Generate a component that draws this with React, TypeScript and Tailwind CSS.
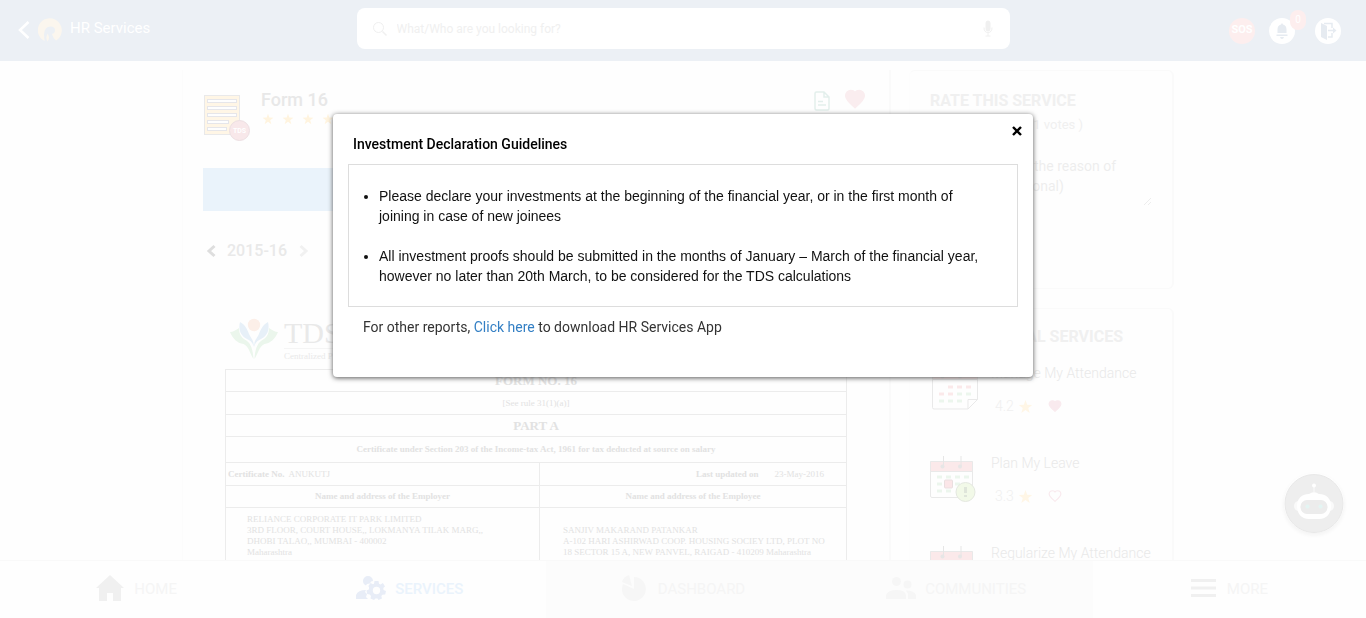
import React from "react";

const StarIcon = ({ className }: { className: string }) => (
  <svg viewBox="0 0 24 24" className={className} fill="currentColor" aria-hidden="true">
    <path d="M12 1.5l2.7 7.7 8.1.2-6.4 5 2.3 7.9-6.7-4.7-6.7 4.7 2.3-7.9-6.4-5 8.1-.2z" />
  </svg>
);

const HeartIcon = ({ className, filled = true }: { className: string; filled?: boolean }) => (
  <svg
    viewBox="0 0 24 24"
    className={className}
    fill={filled ? "currentColor" : "none"}
    stroke="currentColor"
    strokeWidth="2"
    aria-hidden="true"
  >
    <path d="M12 21.2l-1.3-1.2C5.4 15.4 2 12.3 2 8.5 2 5.4 4.4 3 7.5 3c1.7 0 3.4.8 4.5 2.1C13.1 3.8 14.8 3 16.5 3 19.6 3 22 5.4 22 8.5c0 3.8-3.4 6.9-8.7 11.5z" />
  </svg>
);

const FormIcon = () => (
  <svg viewBox="0 0 48 50" className="h-[50px] w-12 shrink-0" aria-hidden="true">
    <rect x="1.500" y="3.500" width="35" height="39" fill="#fff6e6" stroke="#e9e9ea" />
    {[7.5, 14.5, 21.5, 28.5, 35.5].map((y, i) => (
      <rect key={y} x="4.500" y={y} width={i === 3 ? 21 : i === 4 ? 19 : 29} height="3" fill="#fefefe" stroke="#e6e6ea" />
    ))}
    <circle cx="36.500" cy="38.500" r="10" fill="#f8e8ea" stroke="#ecdfe2" />
    <text x="36.500" y="41" textAnchor="middle" fontSize="7" fontWeight="700" fill="#fff" fontFamily="Roboto, sans-serif">
      TDS
    </text>
  </svg>
);

const TdsLogo = () => (
  <svg viewBox="0 0 50 42" className="h-[42px] w-[50px] shrink-0" aria-hidden="true">
    <circle cx="25" cy="7" r="6.200" fill="#fcefe8" />
    <path d="M11 4c-2 8 1 14 7 17 4 2 6 4 6.500 8 1-6-2-8-4-12-2-5-4-10-9.500-13zM39 4c2 8-1 14-7 17-4 2-6 4-6.500 8-1-6 2-8 4-12 2-5 4-10 9.500-13z" fill="#e7f0f8" />
    <path d="M1 14c3 0 6-2 9-4 0 7 3 10 8 13 4 3 6 9 6.500 18-4-6-4-12-10-15C8 25 4 21 1 14zM49 14c-3 0-6-2-9-4 0 7-3 10-8 13-4 3-6 9-6.500 18 4-6 4-12 10-15 6.500-1 10.500-5 13.500-12z" fill="#ebf6ec" />
  </svg>
);

const CalendarIcon = ({ variant }: { variant: "sheet" | "alert" }) => (
  <svg viewBox="1 -2 50 50" className="h-[50px] w-[50px] shrink-0" fill="none" aria-hidden="true">
    {variant === "sheet" ? (
      <>
        <path d="M3.500 6.500h45v28l-9.500 9.500h-34q-1.500 0-1.500-1.500z" stroke="#e9e9e9" />
        <path d="M39 44v-9.500h9.500" stroke="#e9e9e9" />
        <path d="M3.500 6.500h45v8h-45z" fill="#faeaea" stroke="#e9e9e9" />
        <path d="M19 22h5M28 22h5M37 22h5M10 29h5M19 29h5" stroke="#fbe9ea" strokeWidth="3" />
        <path d="M28 29h5M37 29h5M10 36h5M19 36h5M28 36h5" stroke="#ecf6ed" strokeWidth="3" />
      </>
    ) : (
      <>
        <rect x="1.500" y="6.500" width="42" height="36" rx="1.500" stroke="#e9e9e9" />
        <path d="M1.500 6.500h42v10h-42z" fill="#fbe9ea" stroke="#e9e9e9" />
        <path d="M8 22h5M17 22h5M26 22h5M35 22h5M8 29h5M26 29h5M8 36h5M17 36h5" stroke="#ecf6ed" strokeWidth="3" />
        <rect x="15.500" y="25" width="8" height="8" rx="1" fill="#fbe6e8" stroke="#eadfe0" />
        <circle cx="36.500" cy="37" r="9.500" fill="#f2f9e8" stroke="#e4e8e0" />
        <path d="M36.500 32v6M36.500 40v2" stroke="#dfe5da" strokeWidth="3" />
      </>
    )}
    <path d="M14.500 1v10M32 1v10" stroke="#e6e6e6" />
    <circle cx="13.500" cy="11.500" r="2" fill="#e6e6e6" />
    <circle cx="31" cy="11.500" r="2" fill="#e6e6e6" />
  </svg>
);

const RobotIcon = () => (
  <svg viewBox="0 0 60 60" className="size-[60px]" aria-hidden="true">
    <circle cx="30" cy="30.500" r="29" fill="#eee" stroke="#e8e8e8" />
    <path d="M30 12v8" stroke="#fafafa" />
    <circle cx="30" cy="12.500" r="2" fill="#fff" />
    <path d="M14 28q-4 1-4 5t4 5zM46 28q4 1 4 5t-4 5z" fill="#fafafa" />
    <path d="M25 21l3-1.500h4l3 1.500c8 0 12 5 12 12s-4 13-12 13H25c-8 0-12-6-12-13s4-12 12-12z" fill="#fff" />
    <rect x="16.500" y="27" width="27" height="14" rx="6.500" fill="#ececec" />
    <circle cx="23.500" cy="33.500" r="2" fill="#e3f5f3" />
    <circle cx="36.500" cy="33.500" r="2" fill="#e3f5f3" />
  </svg>
);

const Header = () => (
  <header className="grid h-[61px] shrink-0 grid-cols-[1fr_minmax(0,653px)_1fr] items-start bg-[#ecf0f5]">
    <div className="flex h-[60px] items-center pl-[18px] text-white">
      <button aria-label="Back" className="h-5 w-3">
        <svg viewBox="0 0 12 20" className="h-5 w-3" fill="none" stroke="#fff" strokeWidth="2.500" aria-hidden="true">
          <path d="M10.500 2L2 10l8.500 8" />
        </svg>
      </button>
      <svg viewBox="0 0 24 24" className="ml-2 size-6" aria-hidden="true">
        <path d="M6.500 23A12 12 0 1118 22.500q-3-2.500-4-6.500 3-.5 3-4 0-3.500-4.500-3.500-6 0-6.500 8z" fill="#fbf6ee" />
        <path d="M9.500 15.500c2 3 2 5.500 0 8-1.500-2.500-1.500-5 0-8z" fill="#fbf6ee" />
      </svg>
      <h1 className="mb-1 ml-2 text-[15px] leading-5">HR Services</h1>
    </div>
    <label className="mt-2 flex h-[41px] items-center rounded-lg bg-white pr-4 pl-[15px]">
      <svg viewBox="0 0 16 16" className="size-4" fill="none" stroke="#f0f0f0" aria-hidden="true">
        <circle cx="6.500" cy="6.500" r="5" />
        <path d="M10.500 10.500l4 4" strokeWidth="1.500" />
      </svg>
      <input
        type="search"
        aria-label="Search"
        placeholder="What/Who are you looking for?"
        className="ml-[9px] min-w-0 flex-1 bg-transparent text-xs outline-none placeholder:text-[#f0f0f0]"
      />
      <svg viewBox="0 0 12 18" className="h-[18px] w-3" fill="none" stroke="#f0f0f0" aria-hidden="true">
        <rect x="4" y="1" width="4" height="10" rx="2" fill="#f0f0f0" />
        <path d="M2 7.500q0 5 4 5t4-5M6 13v3M3.500 16h5" />
      </svg>
    </label>
    <div className="flex h-[61px] items-center justify-end pr-[25px]">
      <button className="size-[26px] rounded-full bg-[#fdeeee] text-[11px] font-bold text-white">SOS</button>
      <button aria-label="Notifications" className="relative ml-[14px] flex size-[26px] items-center justify-center rounded-full bg-white">
        <svg viewBox="0 0 12 16" className="h-4 w-3" fill="#e6ebf1" aria-hidden="true">
          <path d="M6 0l1 1.500c2.500.5 3.500 2.500 3.500 5V10h-9V6.500c0-2.500 1-4.500 3.500-5zM.5 11.500h11V13H.5zM4 14h4q-.5 2-2 2t-2-2z" />
        </svg>
        <span className="absolute -top-2 left-[21px] flex h-5 w-4 items-center justify-center rounded-full bg-[#fdeeee] text-[10px] text-white">0</span>
      </button>
      <button aria-label="Log out" className="ml-5 flex size-[26px] items-center justify-center rounded-full bg-white">
        <svg viewBox="0 0 18 18" className="size-[18px]" aria-hidden="true">
          <path d="M2 1l6 3v14l-6-3z" fill="#e6ebf1" />
          <path d="M5 1.500h8V6M13 11v4H9M9 8.500h6" fill="none" stroke="#e6ebf1" strokeWidth="1.500" />
          <path d="M14 5.500l3.500 3-3.500 3z" fill="#e6ebf1" />
        </svg>
      </button>
    </div>
  </header>
);

const FormTable = () => (
  <table className="ml-[22px] w-[622px] table-fixed border-collapse font-['Liberation_Serif',serif] text-[9px] leading-[11px] text-[#e2e2e2] [&_td]:border [&_td]:border-[#ececec] [&_td]:py-0 [&_th]:border [&_th]:border-[#ececec] [&_th]:py-0">
    <colgroup>
      <col className="w-[314px]" />
      <col />
    </colgroup>
    <tbody>
      <tr className="h-[22px]"><th colSpan={2} className="text-[13px]">FORM NO. 16</th></tr>
      <tr className="h-[23px]"><td colSpan={2} className="text-center">[See rule 31(1)(a)]</td></tr>
      <tr className="h-[22px]"><th colSpan={2} className="text-[13px]">PART A</th></tr>
      <tr className="h-[26px]"><th colSpan={2}>Certificate under Section 203 of the Income-tax Act, 1961 for tax deducted at source on salary</th></tr>
      <tr className="h-[23px]">
        <td className="pl-0.5"><b>Certificate No.</b>&nbsp; ANUKUTJ</td>
        <td className="pr-[22px] text-right"><b className="mr-4">Last updated on</b>23-May-2016</td>
      </tr>
      <tr className="h-[22px]">
        <th>Name and address of the Employer</th>
        <th>Name and address of the Employee</th>
      </tr>
      <tr className="h-20 align-top">
        <td className="pl-[21px]">
          <p className="mt-[6px]">
            RELIANCE CORPORATE IT PARK LIMITED<br />3RD FLOOR, COURT HOUSE,, LOKMANYA TILAK MARG,,<br />DHOBI TALAO,, MUMBAI - 400002<br />Maharashtra
          </p>
        </td>
        <td className="pl-[23px] whitespace-nowrap">
          <p className="mt-[17px]">
            SANJIV MAKARAND PATANKAR<br />A-102 HARI ASHIRWAD COOP. HOUSING SOCIEY LTD, PLOT NO<br />18 SECTOR 15 A, NEW PANVEL, RAIGAD - 410209 Maharashtra
          </p>
        </td>
      </tr>
    </tbody>
  </table>
);

const services = [
  { name: "Manage My Attendance", rating: "4.2", liked: true, icon: "sheet" as const },
  { name: "Plan My Leave", rating: "3.3", liked: false, icon: "alert" as const },
  { name: "Regularize My Attendance", rating: null, liked: false, icon: "alert" as const },
];

const Content = () => (
  <main className="min-h-0 flex-1 overflow-hidden pt-[9px] pr-[10px]">
    <div className="mx-auto flex max-w-[992px] gap-[18px]">
      <section className="min-w-0 flex-1 border-r-2 border-l border-r-[#fafafa] border-l-[#fcfcfc] pt-[22px] pl-5">
        <div className="flex h-[76px] pr-5">
          <FormIcon />
          <div className="ml-[10px]">
            <h2 className="-mt-px text-lg leading-[18px] font-medium text-[#e8e8e8]">Form 16</h2>
            <div className="mt-1 ml-px flex gap-2 text-[#fff4df]">
              {[1, 2, 3, 4, 5].map((n) => <StarIcon key={n} className="size-3" />)}
            </div>
          </div>
          <svg viewBox="0 0 16 20" className="-mt-px ml-auto h-5 w-4" fill="none" stroke="#e3efec" strokeWidth="1.500" aria-hidden="true">
            <path d="M1 2.500Q1 1 2.500 1H10l5 5v11.500q0 1.500-1.500 1.500h-11Q1 19 1 17.500zM10 1v5h5M4 10.500h5M4 14h8" />
          </svg>
          <HeartIcon className="-mt-1 mr-[3px] ml-[14px] size-[22px] text-[#faedef]" />
        </div>
        <div className="mr-5 h-[43px] bg-[#eaf3fb]" />
        <div className="mt-[30px] flex h-5 items-center text-base font-medium text-[#e9e9e9]">
          <button aria-label="Previous year" className="ml-[3px]">
            <svg viewBox="0 0 10 14" className="h-[14px] w-[10px]" fill="none" stroke="#dedede" strokeWidth="3" aria-hidden="true"><path d="M8.500 2l-5.500 5 5.500 5" /></svg>
          </button>
          <span className="ml-[11px]">2015-16</span>
          <button aria-label="Next year" className="ml-3">
            <svg viewBox="0 0 10 14" className="h-[14px] w-[10px]" fill="none" stroke="#f1f1f1" strokeWidth="3" aria-hidden="true"><path d="M1.500 2L7 7l-5.500 5" /></svg>
          </button>
        </div>
        <div className="mt-[57px] mb-[9px] ml-[26px] flex h-[42px] font-['Liberation_Serif',serif] whitespace-nowrap text-[#e9e9e9]">
          <TdsLogo />
          <div className="ml-[5px]">
            <div className="border-b border-[#f5f5f5] text-[30px] leading-[30px]">TDS</div>
            <div className="text-[9px] leading-[14px]">Centralized P</div>
          </div>
        </div>
        <FormTable />
      </section>
      <aside className="flex w-[265px] flex-col gap-[19px] text-[#f0f0f0]">
        <section className="h-[219px] rounded-md border border-r-2 border-[#fafafa] border-l-[#fdfdfd] px-5 pt-5">
          <h2 className="text-base leading-5 font-bold">RATE THIS SERVICE</h2>
          <p className="mt-1 mr-[69px] text-right text-[13px] leading-5">( 1 votes )</p>
          <textarea
            aria-label="Reason for rating"
            placeholder="Please mention the reason of your rating (optional)"
            className="mt-[21px] h-[50px] w-full pr-8 pl-1 text-sm leading-5 opacity-10 outline-none placeholder:text-[#666]"
          />
        </section>
        <section className="rounded-md border border-r-2 border-[#fafafa] border-l-[#fdfdfd] px-5 pt-[18px]">
          <h2 className="text-base leading-5 font-bold">PROFESSIONAL SERVICES</h2>
          <ul className="mt-4">
            {services.map((s) => (
              <li key={s.name} className="flex h-[90px] gap-[11px]">
                <CalendarIcon variant={s.icon} />
                <div className="min-w-0 flex-1 text-sm leading-5 text-[#e9e9e9]">
                  <h3 className="overflow-hidden font-light whitespace-nowrap">{s.name}</h3>
                  {s.rating && (
                    <div className="mt-[13px] ml-1 flex items-center font-light text-[#f0f0f0]">
                      {s.rating}
                      <StarIcon className="ml-1 size-[15px] text-[#fff6e6]" />
                      <HeartIcon filled={s.liked} className="ml-[15px] size-[14px] text-[#f9eaee]" />
                    </div>
                  )}
                </div>
              </li>
            ))}
          </ul>
        </section>
      </aside>
    </div>
  </main>
);

const Nav = () => (
  <nav className="grid h-[58px] shrink-0 grid-cols-5 border-t border-[#f9f9f9] text-[15px] text-[#f5f5f5] [&>a]:flex [&>a]:items-center [&>a]:justify-center [&>a>svg]:mb-1">
    <a href="#home">
      <svg viewBox="0 0 28 26" className="mr-[10px] h-[26px] w-7" fill="#f0f0f0" aria-hidden="true"><path d="M14 0l14 13h-3v13h-8v-8h-6v8H3V13H0z" /></svg>
      HOME
    </a>
    <a href="#services" className="font-medium text-[#eaf3fc]">
      <svg viewBox="0 0 30 24" className="mr-[9px] h-6 w-[30px]" fill="#e8edf7" aria-hidden="true">
        <path d="M7 5a5 5 0 0110 0l-2 .5-1 2-3 .5-1 1.500A5 5 0 017 5zM0 23v-4q2-5 10-5l-1 2 2 2-1 3 2 2z" />
        <path
          fillRule="evenodd"
          d="M18.500 5h4l.5 2.800 1.500.7 2.400-1.500 2.100 3.400-1.700 1.700.2 1.900 2.500 1-.8 3.500-2.700.2-1.200 1.400.7 2.500-3.500 1.400-1-1.500h-2l-1.500 1.500-3.500-1.600.5-2.500-1.200-1.500-2.600-.3-.7-3.500 2.400-1.200.2-1.800L12.400 10l2.100-3.100L17 8.300l1-.5zM20.500 10.800a3.700 3.700 0 100 7.400 3.700 3.700 0 000-7.400z"
        />
      </svg>
      SERVICES
    </a>
    <a href="#dashboard" className="bg-[#fcfcfc]">
      <svg viewBox="0 0 26 26" className="mr-[11px] size-[26px]" fill="#f6f6f6" aria-hidden="true"><path d="M13 14V2a12 12 0 11-11 7zM11 11L8 0Q2 2 1 7z" /></svg>
      DASHBOARD
    </a>
    <a href="#communities" className="bg-[#fcfcfc]">
      <svg viewBox="0 0 30 22" className="mr-[9px] h-[22px] w-[30px]" fill="#f6f6f6" aria-hidden="true"><circle cx="10.500" cy="4.500" r="4.500" /><circle cx="21.500" cy="7.500" r="4" /><path d="M0 22v-4q2-5 10.500-5T20 18v4zM22 22v-5l-2-3.500q8 0 10 4.500v4z" /></svg>
      COMMUNITIES
    </a>
    <a href="#more">
      <svg viewBox="0 0 25 18" className="mr-[11px] h-[18px] w-[25px]" stroke="#f0f0f0" strokeWidth="3" aria-hidden="true"><path d="M0 1.500h25M0 9h25M0 16.500h25" /></svg>
      MORE
    </a>
  </nav>
);

const GuidelinesDialog = () => (
  <div className="fixed inset-0 z-10 flex items-start justify-center pt-[114px]">
    <div
      role="dialog"
      aria-labelledby="guidelines-title"
      className="relative w-[700px] rounded-sm bg-white px-[15px] pt-5 pb-10 text-sm leading-5 shadow-[0_1px_5px_#555]"
    >
      <button aria-label="Close" className="absolute top-[10px] right-[9px] flex size-[14px] items-center justify-center text-black">
        <svg viewBox="0 0 10 10" className="size-[10px]" stroke="currentColor" strokeWidth="2.400" aria-hidden="true"><path d="M1 1l8 8M9 1L1 9" /></svg>
      </button>
      <h2 id="guidelines-title" className="px-[5px] font-medium text-black">Investment Declaration Guidelines</h2>
      <ul className="mt-[10px] list-disc space-y-5 border border-[#ddd] pt-[21px] pb-5 pl-[30px] font-['Liberation_Sans',sans-serif] text-[#111]">
        <li>
          Please declare your investments at the beginning of the financial year, or in the first month of<br />joining in case of new joinees
        </li>
        <li>
          All investment proofs should be submitted in the months of January – March of the financial year,<br />however no later than 20th March, to be considered for the TDS calculations
        </li>
      </ul>
      <p className="mt-[10px] px-[15px] text-[#333]">
        For other reports, <a href="#download" className="text-[#337fc4]">Click here</a> to download HR Services App
      </p>
    </div>
  </div>
);

export default function App() {
  return (
    <div className="flex h-screen flex-col overflow-hidden bg-[#fefefe] font-[Roboto,sans-serif]">
      <Header />
      <Content />
      <Nav />
      <button aria-label="Chat assistant" className="fixed right-[22px] bottom-[85px] rounded-full shadow-[0_2px_4px_#f2f2f2]">
        <RobotIcon />
      </button>
      <GuidelinesDialog />
    </div>
  );
}
